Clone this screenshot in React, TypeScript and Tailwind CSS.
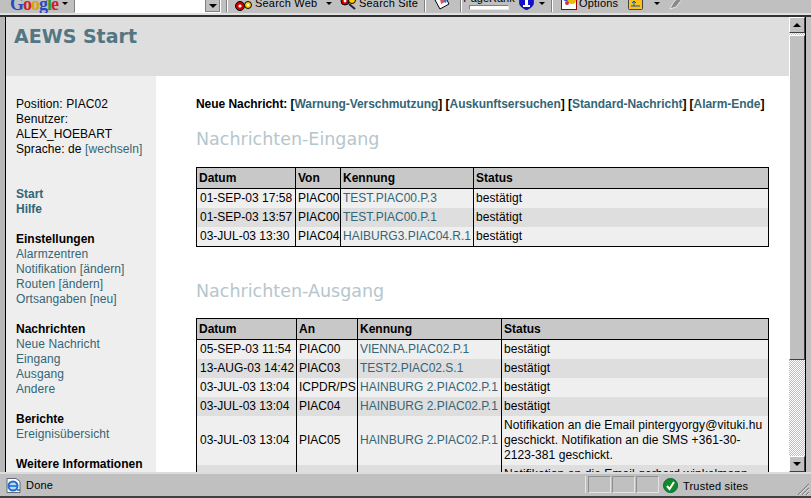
import React from 'react';

const arial = { fontFamily: '"Liberation Sans", Arial, sans-serif' };
const verdana = { fontFamily: '"DejaVu Sans", Verdana, sans-serif' };

type Row = { datum: string; peer: string; kennung: string; status: string };

const inbox: Row[] = [
  { datum: '01-SEP-03 17:58', peer: 'PIAC00', kennung: 'TEST.PIAC00.P.3', status: 'bestätigt' },
  { datum: '01-SEP-03 13:57', peer: 'PIAC00', kennung: 'TEST.PIAC00.P.1', status: 'bestätigt' },
  { datum: '03-JUL-03 13:30', peer: 'PIAC04', kennung: 'HAIBURG3.PIAC04.R.1', status: 'bestätigt' },
];

const outbox: Row[] = [
  { datum: '05-SEP-03 11:54', peer: 'PIAC00', kennung: 'VIENNA.PIAC02.P.1', status: 'bestätigt' },
  { datum: '13-AUG-03 14:42', peer: 'PIAC03', kennung: 'TEST2.PIAC02.S.1', status: 'bestätigt' },
  { datum: '03-JUL-03 13:04', peer: 'ICPDR/PS', kennung: 'HAINBURG 2.PIAC02.P.1', status: 'bestätigt' },
  { datum: '03-JUL-03 13:04', peer: 'PIAC04', kennung: 'HAINBURG 2.PIAC02.P.1', status: 'bestätigt' },
  {
    datum: '03-JUL-03 13:04',
    peer: 'PIAC05',
    kennung: 'HAINBURG 2.PIAC02.P.1',
    status: 'Notifikation an die Email pintergyorgy@vituki.hu geschickt. Notifikation an die SMS +361-30-2123-381 geschickt.',
  },
  { datum: '', peer: '', kennung: '', status: 'Notifikation an die Email gerhard.winkelmann' },
];

const Link = ({ children }: { children: React.ReactNode }) => (
  <a className="text-[#336677]">{children}</a>
);

const MessageTable = ({ peerLabel, rows, widths }: { peerLabel: string; rows: Row[]; widths: number[] }) => (
  <table className="w-[572px] table-fixed border-collapse border border-black text-[12px] leading-[15px] tracking-normal text-black">
    <colgroup>
      {widths.map((w, i) => (
        <col key={i} style={{ width: w }} />
      ))}
    </colgroup>
    <thead>
      <tr className="h-[21px] bg-[#c8c8c8]">
        {['Datum', peerLabel, 'Kennung', 'Status'].map(h => (
          <th key={h} className="border border-black px-[2px] text-left font-bold">{h}</th>
        ))}
      </tr>
    </thead>
    <tbody>
      {rows.map((r, i) => (
        <tr key={i} className={i % 2 === 0 ? 'bg-[#efefef]' : 'bg-[#dedede]'}>
          <td className="h-[19px] border-x border-black px-[3px] py-[2px] whitespace-nowrap">{r.datum}</td>
          <td className="border-x border-black px-[2px] py-[2px] whitespace-nowrap">{r.peer}</td>
          <td className="border-x border-black px-[2px] py-[2px] whitespace-nowrap"><Link>{r.kennung}</Link></td>
          <td className="border-x border-black px-[2px] py-[2px] tracking-[0.08px]">{r.status}</td>
        </tr>
      ))}
    </tbody>
  </table>
);

const SideGroup = ({ title, items }: { title: string; items: string[] }) => (
  <div className="mb-[15px]">
    <div className="font-bold tracking-normal text-black">{title}</div>
    {items.map(t => (
      <div key={t}><Link>{t}</Link></div>
    ))}
  </div>
);

const Sep = ({ className }: { className: string }) => (
  <div className={`mb-[1px] h-[16px] w-[2px] shrink-0 border-x border-l-[#808080] border-r-white ${className}`} />
);

const Caret = ({ className }: { className: string }) => (
  <span className={`mb-[8px] h-0 w-0 shrink-0 border-x-[3px] border-t-[3px] border-x-transparent border-t-black ${className}`} />
);

const Toolbar = () => (
  <div className="h-[15px] shrink-0 overflow-hidden border-b-2 border-b-[#e0e0e0] bg-[#c0c0c0]" style={arial}>
    <div className="-mt-[6px] flex h-[19px] items-end text-[11px] leading-[14px] tracking-[0.2px] text-black">
      <span className="-mb-[1px] ml-[10px] w-[50px] shrink-0 text-[18px] leading-[19px] font-bold tracking-[-1px]" style={{ fontFamily: '"Liberation Serif", serif' }}>
        <span className="text-[#2a4bc0]">G</span><span className="text-[#c22]">o</span><span className="text-[#d9a400]">o</span><span className="text-[#2a4bc0]">g</span><span className="text-[#2a9a2a]">l</span><span className="text-[#c22]">e</span>
      </span>
      <Caret className="ml-[2px]" />
      <div className="ml-[6px] flex h-[18px] w-[147px] shrink-0 justify-end border border-[#808080] border-r-white border-b-white bg-white">
        <div className="flex h-[16px] w-[15px] items-end justify-center border border-[#808080] bg-[#c0c0c0] pb-[3px]">
          <span className="h-0 w-0 border-x-[4px] border-t-[4px] border-x-transparent border-t-black" />
        </div>
      </div>
      <Sep className="ml-[5px]" />
      <svg className="mb-[2px] ml-[7px] shrink-0" width="17" height="14" viewBox="0 0 17 14">
        <circle cx="5" cy="9" r="4.5" fill="#c00" stroke="#000" />
        <circle cx="5" cy="9" r="1.6" fill="#fff" />
        <circle cx="13" cy="8" r="3.5" fill="#fc0" stroke="#000" />
        <circle cx="13" cy="8" r="1.2" fill="#fff" />
      </svg>
      <span className="mb-[3px] ml-[3px] w-[60px] shrink-0 whitespace-nowrap">Search Web</span>
      <Caret className="ml-[11px]" />
      <svg className="mb-[3px] ml-[8px] shrink-0" width="17" height="14" viewBox="0 0 17 14">
        <circle cx="5" cy="5" r="4" fill="#c00" stroke="#000" />
        <circle cx="5" cy="5" r="1.4" fill="#fff" />
        <circle cx="12" cy="4" r="3.5" fill="#fc0" stroke="#000" />
        <path d="M9 8l6 5" stroke="#223" strokeWidth="2" />
      </svg>
      <span className="mb-[3px] ml-[2px] w-[54px] shrink-0 whitespace-nowrap">Search Site</span>
      <Sep className="ml-[11px]" />
      <svg className="mb-[3px] ml-[8px] shrink-0" width="16" height="14" viewBox="0 0 16 14">
        <path d="M1 4l10-4 4 8-9 5z" fill="#fff" stroke="#000" />
        <path d="M6 3l4-1 1 4-4 2z" fill="#d55" />
        <path d="M10 2l3 2-1 3-2-1z" fill="#47c" />
      </svg>
      <Sep className="ml-[10px]" />
      <div className="ml-[7px] flex w-[40px] shrink-0 flex-col items-center">
        <span className="text-[11px] leading-[11px] tracking-normal whitespace-nowrap">PageRank</span>
        <div className="mt-[1px] mb-[3px] h-[5px] w-[40px] border border-t-[#808080] border-r-[#e8e8e8] border-b-[#e8e8e8] border-l-[#808080] bg-white" />
      </div>
      <svg className="mb-[3px] ml-[10px] shrink-0" width="15" height="15" viewBox="0 0 15 15">
        <path d="M0.5 0h14v8c0 3-3 5-7 7-4-2-7-4-7-7z" fill="#1111cc" stroke="#000" strokeWidth="0.5" />
        <path d="M5 3h4v7h2v2H4v-2h2V5H5z" fill="#fff" />
      </svg>
      <Caret className="ml-[5px]" />
      <Sep className="ml-[6px]" />
      <svg className="mb-[3px] ml-[8px] shrink-0" width="16" height="16" viewBox="0 0 16 16">
        <rect x="0.5" y="0.5" width="15" height="15" fill="#fff" stroke="#900" />
        <circle cx="5" cy="4" r="3" fill="#24b" />
        <circle cx="11" cy="6" r="4" fill="#eb0" />
        <circle cx="6" cy="9" r="2" fill="#c33" />
      </svg>
      <span className="mb-[3px] ml-[2px] w-[36px] shrink-0">Options</span>
      <svg className="mb-[3px] ml-[13px] shrink-0" width="15" height="16" viewBox="0 0 15 16">
        <rect x="0.5" y="0.5" width="14" height="15" rx="1" fill="#fcc21b" stroke="#444" />
        <path d="M3 12h9M6 12V7M4 9l2-2 2 2" stroke="#05a" fill="none" />
      </svg>
      <Caret className="ml-[11px]" />
      <svg className="mb-[3px] ml-[9px] shrink-0" width="15" height="16" viewBox="0 0 15 16">
        <path d="M1 15l3-6 7-8 3 3-7 9z" fill="#8a8a8a" stroke="#fff" strokeWidth="0.7" />
      </svg>
    </div>
  </div>
);

const ScrollBtn = ({ up }: { up?: boolean }) => (
  <div className="flex h-[16px] shrink-0 items-center justify-center border border-t-white border-r-[#404040] border-b-[#404040] border-l-white bg-[#c0c0c0]">
    <span className={up ? 'h-0 w-0 border-x-[4px] border-b-[4px] border-x-transparent border-b-black' : 'h-0 w-0 border-x-[4px] border-t-[4px] border-x-transparent border-t-black'} />
  </div>
);

const Scrollbar = () => (
  <div className="flex w-[16px] shrink-0 flex-col bg-[repeating-conic-gradient(#c0c0c0_0_25%,#ffffff_0_50%)] bg-[length:2px_2px]">
    <ScrollBtn up />
    <div className="mt-[2px] h-[325px] shrink-0 border border-t-white border-r-[#404040] border-b-[#404040] border-l-white bg-[#c0c0c0]" />
    <div className="flex-1" />
    <ScrollBtn />
  </div>
);

const StatusCell = ({ className }: { className: string }) => (
  <div className={`h-[17px] shrink-0 border border-t-[#909090] border-r-[#e4e4e4] border-b-[#e4e4e4] border-l-[#909090] ${className}`} />
);

const StatusBar = () => (
  <div className="h-[26px] shrink-0 border-t-2 border-t-[#dcdcdc] bg-[#c0c0c0] text-[11px] leading-[14px] tracking-[0.2px] text-black" style={arial}>
    <div className="flex h-[22px] items-end pb-[3px]">
      <svg className="ml-[6px] shrink-0" width="15" height="16" viewBox="0 0 15 16">
        <path d="M1 1.5h9l4 3v11H1z" fill="#fff" stroke="#667" />
        <circle cx="7" cy="9" r="4.5" fill="#bcd8f4" stroke="#1a6fd0" strokeWidth="2" />
        <path d="M3 9h8" stroke="#1a6fd0" strokeWidth="1.6" />
        <path d="M11 13h3" stroke="#1a6fd0" strokeWidth="1.6" />
      </svg>
      <span className="mb-[1px] ml-[5px] flex-1">Done</span>
      <div className="h-[17px] w-[1px] shrink-0 bg-[#e4e4e4]" />
      <StatusCell className="ml-[2px] w-[23px]" />
      <StatusCell className="ml-[1px] w-[23px]" />
      <StatusCell className="ml-[1px] w-[23px]" />
      <div className="ml-[1px] flex w-[151px] shrink-0 items-center">
        <svg className="ml-[3px] shrink-0" width="15" height="15" viewBox="0 0 15 15">
          <circle cx="7.5" cy="7.5" r="7" fill="#118a2a" stroke="#063" />
          <path d="M4 8l2.5 3L11 4" stroke="#fff" strokeWidth="2" fill="none" />
        </svg>
        <span className="ml-[5px] flex-1">Trusted sites</span>
        <svg className="mr-[2px] -mb-[2px] shrink-0 self-end" width="14" height="14" viewBox="0 0 14 14">
          <path d="M3 14L14 3M7 14l7-7M11 14l3-3" stroke="#808080" strokeWidth="1.2" />
          <path d="M4 14L14 4M8 14l6-6M12 14l2-2" stroke="#fff" strokeWidth="0.6" />
        </svg>
      </div>
    </div>
    <div className="h-[2px] bg-[#404040]" />
  </div>
);

const App: React.FC = () => {
  return (
    <div className="flex h-screen flex-col overflow-hidden bg-[#c0c0c0]">
      <Toolbar />
      <div className="h-[2px] shrink-0 bg-[#303030]" />
      <div className="flex min-h-0 flex-1">
        <div className="w-[6px] shrink-0 border-r border-r-black bg-[#b8b8b8]" />
        <div className="flex min-w-0 flex-1 flex-col overflow-hidden text-[12px] leading-[15px] tracking-[0.08px]" style={arial}>
          <header className="h-[59px] shrink-0 bg-[#dedede] pt-[8px] pl-[8px]">
            <h1 className="text-[19px] leading-[22px] font-bold tracking-normal text-[#527682]" style={verdana}>AEWS Start</h1>
          </header>
          <div className="flex min-h-0 flex-1 overflow-hidden">
            <aside className="w-[150px] shrink-0 bg-[#eeeeee] pt-[21px] pl-[10px] text-black">
              <div>Position: PIAC02</div>
              <div>Benutzer:</div>
              <div>ALEX_HOEBART</div>
              <div>Sprache: de <Link>[wechseln]</Link></div>
              <div className="mt-[30px] mb-[15px] font-bold tracking-normal">
                <div><Link>Start</Link></div>
                <div><Link>Hilfe</Link></div>
              </div>
              <SideGroup title="Einstellungen" items={['Alarmzentren', 'Notifikation [ändern]', 'Routen [ändern]', 'Ortsangaben [neu]']} />
              <SideGroup title="Nachrichten" items={['Neue Nachricht', 'Eingang', 'Ausgang', 'Andere']} />
              <SideGroup title="Berichte" items={['Ereignisübersicht']} />
              <div className="font-bold tracking-normal whitespace-nowrap">Weitere Informationen</div>
            </aside>
            <main className="min-w-0 flex-1 bg-white pt-[21px] pl-[40px]">
              <p className="font-bold tracking-[-0.05px] whitespace-nowrap text-black">
                Neue Nachricht: [<Link>Warnung-Verschmutzung</Link>] [<Link>Auskunftsersuchen</Link>] [<Link>Standard-Nachricht</Link>] [<Link>Alarm-Ende</Link>]
              </p>
              <h2 className="mt-[17px] mb-[18px] text-[17.5px] leading-[20px] tracking-normal text-[#b6c6cc]" style={verdana}>Nachrichten-Eingang</h2>
              <MessageTable peerLabel="Von" rows={inbox} widths={[99, 45, 133, 295]} />
              <h2 className="mt-[34px] mb-[17px] text-[17.5px] leading-[20px] tracking-normal text-[#b6c6cc]" style={verdana}>Nachrichten-Ausgang</h2>
              <MessageTable peerLabel="An" rows={outbox} widths={[100, 61, 144, 267]} />
            </main>
          </div>
        </div>
        <Scrollbar />
        <div className="w-[6px] shrink-0 border-l border-l-black bg-[#c0c0c0]" />
      </div>
      <StatusBar />
    </div>
  );
};

export default App;
